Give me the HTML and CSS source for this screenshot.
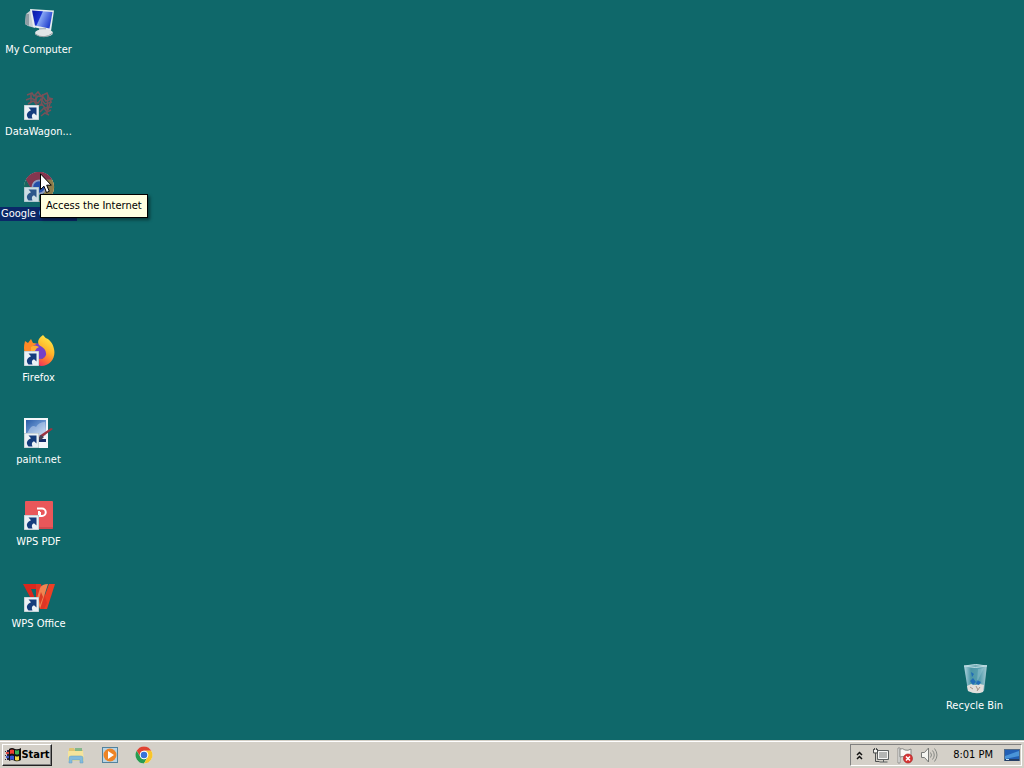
FILE: index.html
```html
<!DOCTYPE html>
<html lang="en">
<head>
<meta charset="utf-8">
<title>Desktop</title>
<link rel="stylesheet" href="styles.css">
</head>
<body>
<svg class="defs" aria-hidden="true">
  <defs>
    <symbol id="shortcut" viewBox="0 0 15 15">
      <rect width="15" height="15" fill="#a9b7bd"/>
      <rect x="0.5" y="0.5" width="14" height="14" fill="#eaf1f5"/>
      <path d="M4.500 2.500H12.500v8L10 8.200C7.800 9 7.300 11 8.500 13.500H4.500C1.500 10 3 7 7 5.200Z" fill="#143c7c"/>
    </symbol>
    <symbol id="chrome" viewBox="0 0 32 32">
      <circle cx="16" cy="16" r="15" fill="#fff"/>
      <path d="M3 8.500A15 15 0 0 1 29 8.500H16A7.500 7.500 0 0 0 9.500 19.750Z" fill="#df4433"/>
      <path d="M3 8.500A15 15 0 0 0 16 31L22.500 19.750A7.500 7.500 0 0 1 9.500 19.750Z" fill="#279c50"/>
      <path d="M29 8.500A15 15 0 0 1 16 31L22.500 19.750A7.500 7.500 0 0 0 16 8.500Z" fill="#f8c52b"/>
      <circle cx="16" cy="16" r="7.500" fill="#fff"/>
      <circle cx="16" cy="16" r="5.800" fill="#3873d8"/>
    </symbol>
  </defs>
</svg>

<main class="desktop">
  <button class="item row-1" type="button">
    <svg class="icon" viewBox="0 0 32 32" aria-hidden="true">
      <defs><linearGradient id="scr" x2="1" y2=".4"><stop offset="0" stop-color="#0716a2"/><stop offset=".45" stop-color="#1730cf"/><stop offset=".5" stop-color="#86a5f4"/><stop offset="1" stop-color="#2645cf"/></linearGradient></defs>
      <path d="M3 7 8 3l4 1v17l-7-2-3-2Z" fill="#c6ced2"/>
      <path d="M3 7 6 7v12l-4-2Z" fill="#8f9da4"/>
      <path d="M7 2 31 3.500 28 24 10 20Z" fill="#e7edf0"/>
      <path d="M9 3.500 29.500 5 26.500 21.500 12 18.500Z" fill="url(#scr)"/>
      <path d="M16 21h7v4h-7Z" fill="#aeb9c1"/>
      <ellipse cx="21" cy="26" rx="9" ry="3.800" fill="#dfe5e6"/>
      <path d="M12 27q9 6 18-1" fill="none" stroke="#8f9a9d"/>
    </svg>
    <span class="label">My Computer</span>
  </button>

  <button class="item row-2" type="button">
    <svg class="icon" viewBox="0 0 32 32" aria-hidden="true">
      <g fill="none" stroke="#785158" stroke-width="1.500">
        <path d="M4 6l5-2 2 3 4-4 3 4 6-3 2 5 4 1M3 11l5-2 4 2 3-4 5 1 3 4 6-2M5 15l5-3 5 2 3-4 4 5 7-2M14 18l5-3 3 4 7-1M17 23l4-4 3 4 4-2M18 27l4-3 4 2"/>
        <path d="M8 5v8M13 6v9M20 5l-2 12M25 6l-1 19M28 11l-3 10M11 12l4 6"/>
      </g>
      <use href="#shortcut" x="1" y="16" width="15" height="15"/>
    </svg>
    <span class="label">DataWagon...</span>
  </button>

  <div class="hover-item row-3">
    <button class="item selected" type="button" aria-describedby="tip">
      <svg class="icon" viewBox="0 0 32 32" aria-hidden="true">
        <use href="#chrome" width="32" height="32"/>
        <circle cx="16" cy="16" r="15" fill="#0a2472" opacity=".45"/>
        <path d="M3 8.500A15 15 0 0 1 29 8.500H16A7.500 7.500 0 0 0 9.500 19.750Z" fill="#84364f"/>
        <use href="#shortcut" x="1" y="16" width="15" height="15"/>
        <path d="M1 16h15v15H1Z" fill="#6aa9b7" opacity=".25"/>
      </svg>
      <span class="label">Google Chrome</span>
    </button>
    <span class="tooltip" id="tip" role="tooltip">Access the Internet</span>
    <svg class="cursor" viewBox="0 0 12 21" aria-hidden="true">
      <path d="M.5.800V16.500L4 13.200 6.500 19.500 9.300 18.300 6.700 12.200H11.300Z" fill="#fff" stroke="#000"/>
    </svg>
  </div>

  <button class="item row-5" type="button">
    <svg class="icon" viewBox="0 0 32 32" aria-hidden="true">
      <defs><linearGradient id="fox" x1=".8" x2=".3" y2="1"><stop offset="0" stop-color="#fff04b"/><stop offset=".45" stop-color="#ffb52a"/><stop offset=".75" stop-color="#ff6b38"/><stop offset="1" stop-color="#ee2b62"/></linearGradient></defs>
      <path d="M2 6 5 8 8 4 10 8q4 0 6 2l4 2 2 8-8 8-9-3Q-1 17 2 6Z" fill="#ff8a26"/>
      <circle cx="17" cy="16" r="8" fill="#7540c8"/>
      <path d="M20 0q-7 5-4 10 8 4 7 10-2 5-8 4l-6-3q2 9 9 10c10 0 15-9 13-17-1-6-4-8-6-10Q22 3 20 0Z" fill="url(#fox)"/>
      <path d="M8 12q4-3 8 0-3 1-4 4l-4 1Z" fill="#ffae32"/>
      <use href="#shortcut" x="1" y="16" width="15" height="15"/>
    </svg>
    <span class="label">Firefox</span>
  </button>

  <button class="item row-6" type="button">
    <svg class="icon" viewBox="0 0 32 32" aria-hidden="true">
      <defs><linearGradient id="photo" x2="1" y2="1"><stop offset="0" stop-color="#295ba6"/><stop offset=".5" stop-color="#6592ce"/><stop offset="1" stop-color="#dceafa"/></linearGradient></defs>
      <path d="M1 1h24v30H1Z" fill="#f4f7fa"/>
      <path d="M3 3h20v16H3Z" fill="url(#photo)"/>
      <path d="M6 13q3-6 7-3 3-5 9-5v13H3Z" fill="#c9daef" opacity=".5"/>
      <path d="M16 22h7v3h-7Z" fill="#162d68"/>
      <path d="m16 19 12-8 2 1-12 9Z" fill="#9c3440"/>
      <path d="m14 22 4-4 3 2-3 3Z" fill="#464256"/>
      <use href="#shortcut" x="1" y="16" width="15" height="15"/>
    </svg>
    <span class="label">paint.net</span>
  </button>

  <button class="item row-7" type="button">
    <svg class="icon" viewBox="0 0 32 32" aria-hidden="true">
      <rect x="2" y="2" width="28" height="28" rx="1" fill="#e9575a"/>
      <path d="M2 29h28" stroke="#ba4147"/>
      <path d="M14 9.500h5a3.700 3.700 0 0 1 0 7.500H16V12" fill="none" stroke="#fff" stroke-width="2"/>
      <path d="M17 13v5" stroke="#fff" stroke-width="2"/>
      <use href="#shortcut" x="1" y="16" width="15" height="15"/>
    </svg>
    <span class="label">WPS PDF</span>
  </button>

  <button class="item row-8" type="button">
    <svg class="icon" viewBox="0 0 32 32" aria-hidden="true">
      <path d="M0 3h13l2 5h-7l8 19h-3Z" fill="#d9281e"/>
      <path d="M26 3h6l-8 25h-7Z" fill="#ed3f25"/>
      <path d="m13 3h5l6 19-3 6h-4l-4-12Z" fill="#df3524"/>
      <path d="M14 17 17 7q2-4 8-4l-8 25Z" fill="#f28350"/>
      <path d="m18 11 2 5-3 8-1-6Z" fill="#d93b24"/>
      <use href="#shortcut" x="1" y="16" width="15" height="15"/>
    </svg>
    <span class="label">WPS Office</span>
  </button>

  <button class="item row-9 right" type="button">
    <svg class="icon" viewBox="0 0 32 32" aria-hidden="true">
      <defs><linearGradient id="glass" x2="1"><stop offset="0" stop-color="#b2d5df"/><stop offset=".3" stop-color="#4b96a6"/><stop offset=".7" stop-color="#59a0b0"/><stop offset="1" stop-color="#a6cbd3"/></linearGradient></defs>
      <path d="M5 3 28 2 25 28q-7 4-16 0Z" fill="url(#glass)"/>
      <path d="M5 3q12-3 23 0-12 3-23 0Z" fill="#72acb6" stroke="#bddce2"/>
      <path d="m8 23 4-2 4 1 5-1 4 1-1 7q-7 3-15-1Z" fill="#e1dedb"/>
      <path d="m11 18 3-3 3 4-3 3Zm7-1 4 2-2 3-3-1ZM12 9l3 2-2 3Z" fill="#216cb7"/>
      <path d="m11 24 3 2m3-3 2 4m2-3-3 4" stroke="#a69387"/>
      <path d="m19 6 6-1-7 14Z" fill="#b5dce3" opacity=".3"/>
    </svg>
    <span class="label">Recycle Bin</span>
  </button>
</main>

<footer class="taskbar">
  <button class="start" type="button">
    <svg class="flag" viewBox="0 0 17 16" aria-hidden="true">
      <path d="M1 4h1v1H1Zm2-1h2v2H3ZM1 8h1v1H1Zm2-1h2v2H3ZM1 12h1v1H1Zm2-1h2v2H3Z" fill="#272344"/>
      <path d="M2 5h3v2H2Z" fill="#d84640"/><path d="M2 9h3v2H2Z" fill="#4159bd"/>
      <path d="M5 2q3-2 6 0 3 1 6-1v12q-3 2-6 1-3-2-6 0Z" fill="#111"/>
      <path d="M6 3q2-1 4 0v4q-2-1-4 0Z" fill="#ef3e32"/>
      <path d="M11 3q2 1 4 0v4q-2 1-4 0Z" fill="#3bae54"/>
      <path d="M6 9q2-1 4 0v4q-2-1-4 0Z" fill="#3956d5"/>
      <path d="M11 9q2 1 4 0v4q-2 1-4 0Z" fill="#f1d548"/>
    </svg>
    <span>Start</span>
  </button>
  <nav class="quick" aria-label="Quick launch">
    <button class="tool" type="button" aria-label="File Explorer">
      <svg viewBox="0 0 18 18" aria-hidden="true">
        <path d="M2 3q0-1 1-1h4l1 2h7q1 0 1 1v9H2Z" fill="#dfc572"/>
        <path d="M8 2h7v5H8Z" fill="#84b88b"/>
        <path d="M1 5h15l1 10H1Z" fill="#f5e49b"/>
        <path d="M2 12q0-2 2-2h10q2 0 2 2v5h-3v-3H5v3H2Z" fill="#83bbdc" stroke="#649dc0" stroke-width=".5"/>
      </svg>
    </button>
    <button class="tool" type="button" aria-label="Media Player">
      <svg viewBox="0 0 18 18" aria-hidden="true">
        <rect x="1.500" y="1.500" width="15" height="15" fill="#b9d4e4" stroke="#52839e"/>
        <circle cx="9" cy="9" r="6.500" fill="#ed8425"/>
        <path d="m7 5 6 4-6 4Z" fill="#fff"/>
      </svg>
    </button>
    <button class="tool" type="button" aria-label="Google Chrome">
      <svg viewBox="0 0 18 18" aria-hidden="true"><use href="#chrome" width="18" height="18"/></svg>
    </button>
  </nav>
  <section class="tray" aria-label="Notification area">
    <button class="chevron" type="button" aria-label="Show hidden icons">
      <svg viewBox="0 0 7 9" aria-hidden="true"><path d="m1 4 2.500-2.500L6 4M1 8l2.500-2.500L6 8" fill="none" stroke="#111" stroke-width="1.500"/></svg>
    </button>
    <button class="tool" type="button" aria-label="Network">
      <svg viewBox="0 0 18 18" aria-hidden="true">
        <path d="M5.500 4.500h11v9h-11Z" fill="#b4b5b3" stroke="#5d6060"/>
        <path d="M6.500 5.500h9v7h-9Z" fill="none" stroke="#f7f7f5"/>
        <path d="M11.500 14v2m-4 0h8" stroke="#5d6060"/>
        <path d="M1.500 3v4h4V3m-3-1v3m2-3v3M3.500 7v8.500h4" fill="none" stroke="#4d5050"/>
        <path d="M2 4h3v2H2Z" fill="#f5f5f2"/>
      </svg>
    </button>
    <button class="tool" type="button" aria-label="Action Center">
      <svg viewBox="0 0 18 18" aria-hidden="true">
        <path d="M2 2h2v15H2Z" fill="#f7f7f4" stroke="#777" stroke-width=".7"/>
        <path d="M4 3q3-1 5 1 3 1 6-1v8q-3 2-6 0-2-1-5 0Z" fill="#f8f8f5" stroke="#858783"/>
        <circle cx="12" cy="12.500" r="4.500" fill="#d93332" stroke="#a72a2b" stroke-width=".7"/>
        <path d="m10 10.500 4 4m0-4-4 4" stroke="#fff" stroke-width="1.500"/>
      </svg>
    </button>
    <button class="tool" type="button" aria-label="Volume">
      <svg viewBox="0 0 18 18" aria-hidden="true">
        <path d="M1.500 6.500h3l4-4.500v14l-4-4.500h-3Z" fill="#f5f5f1" stroke="#777976"/>
        <path d="M10.500 6.500q2 2.500 0 5M12.500 4.500q3.500 4.500 0 9M14.500 2.500q5 6.500 0 13" fill="none" stroke="#868884"/>
      </svg>
    </button>
    <time class="clock">8:01 PM</time>
    <button class="tool" type="button" aria-label="Show desktop">
      <svg viewBox="0 0 18 18" aria-hidden="true">
        <rect x="1.500" y="3.500" width="15" height="11" fill="#225fb4" stroke="#526b88"/>
        <path d="m2 10 14-5v5L2 13Z" fill="#4a94d9"/>
        <path d="M2 13h14v2H2Z" fill="#243d65"/><path d="M3 13h3v1H3Z" fill="#bce0ef"/>
      </svg>
    </button>
  </section>
</footer>
</body>
</html>
```
FILE: styles.css
```css
* { box-sizing: border-box; }

body {
  display: flex;
  flex-direction: column;
  min-height: 100vh;
  margin: 0;
  background: #0f686a;
  font: 11px/14px "DejaVu Sans Condensed", "DejaVu Sans", sans-serif;
  color: #000;
}

button {
  margin: 0;
  padding: 0;
  border: 0;
  background: none;
  font: inherit;
  color: inherit;
}

.defs { position: absolute; width: 0; height: 0; }

.desktop {
  flex: 1;
  display: grid;
  grid-template-columns: 77px 1fr 77px;
  grid-template-rows: repeat(9, 82px);
  padding-right: 11px;
}

.item {
  display: flex;
  flex-direction: column;
  align-items: center;
  align-self: start;
  gap: 4px;
  width: 77px;
  padding-top: 7px;
  color: #fff;
}

.row-1 { grid-row: 1; }
.row-2 { grid-row: 2; }
.row-3 { grid-row: 3; }
.row-5 { grid-row: 5; }
.row-6 { grid-row: 6; }
.row-7 { grid-row: 7; }
.row-8 { grid-row: 8; }
.row-9 { grid-row: 9; }
.right { grid-column: 3; }

.icon { width: 32px; height: 32px; }
.label { white-space: nowrap; }

.selected .label {
  width: 100%;
  padding-left: 1px;
  background: #0a2868;
  text-align: left;
}

.hover-item { position: relative; }

.tooltip {
  position: absolute;
  top: 30px;
  left: 40px;
  padding: 4px 5px;
  border: 1px solid #000;
  background: #ffffe1;
  box-shadow: 2px 2px 3px rgba(0, 0, 0, 0.45);
  white-space: nowrap;
}

.cursor {
  position: absolute;
  top: 9px;
  left: 40px;
  width: 12px;
  height: 21px;
}

.taskbar {
  display: flex;
  align-items: center;
  height: 28px;
  padding: 1px 2px 0;
  border-top: 1px solid #d4d0c8;
  background: #d4d0c8;
  box-shadow: inset 0 1px #fff;
}

.start {
  display: flex;
  align-items: center;
  justify-content: center;
  width: 50px;
  height: 22px;
  border: 1px solid;
  border-color: #fff #222 #222 #fff;
  box-shadow: inset -1px -1px #808080;
  font-weight: bold;
}

.flag { width: 17px; height: 16px; }

.quick {
  display: flex;
  gap: 16px;
  margin-left: 15px;
}

.tool, .tool svg {
  display: block;
  width: 18px;
  height: 18px;
}

.tray {
  display: flex;
  align-items: center;
  gap: 6px;
  height: 22px;
  margin-left: auto;
  padding-left: 5px;
  border: 1px solid;
  border-color: #808080 #fff #fff #808080;
}

.chevron svg { display: block; width: 7px; height: 9px; }
.chevron { margin-right: 3px; }
.clock { margin: 0 4px 0 9px; white-space: nowrap; }
```
